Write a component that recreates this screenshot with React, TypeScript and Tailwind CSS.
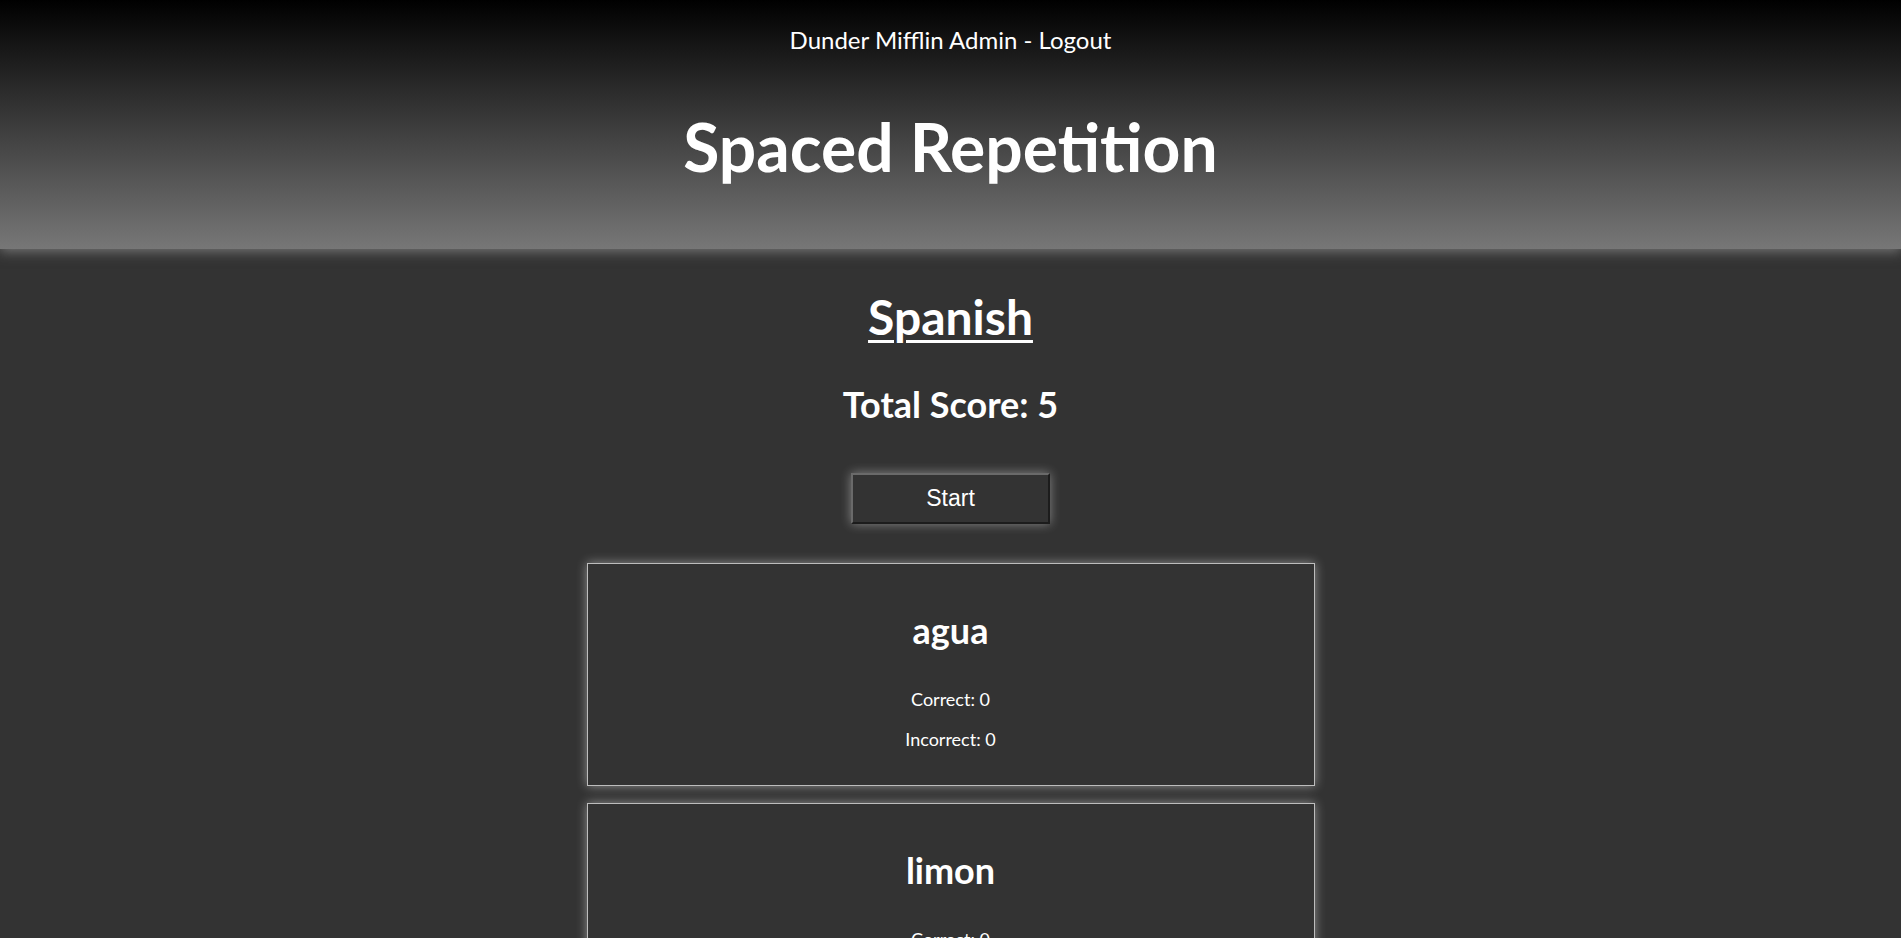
import React from "react";

const words = [
  { id: 1, word: "agua", correct: 0, incorrect: 0 },
  { id: 2, word: "limon", correct: 0, incorrect: 0 },
  { id: 3, word: "naranja", correct: 0, incorrect: 0 },
];

function WordCard({ word, correct, incorrect }: { word: string; correct: number; incorrect: number }) {
  return (
    <li className="w-[728px] border border-[#bdbdbd] bg-[#333333] shadow-[0_0_10px_rgba(255,255,255,0.45)] pt-[45px] pb-[35px] flex flex-col items-center">
      <h3 className="text-[36px] leading-[1.2] font-bold text-white">{word}</h3>
      <p className="mt-[37px] text-[18px] leading-[1.2] text-white">Correct: {correct}</p>
      <p className="mt-[18px] text-[18px] leading-[1.2] text-white">Incorrect: {incorrect}</p>
    </li>
  );
}

export default function App() {
  return (
    <div className="min-h-screen bg-[#333333] font-['Lato',sans-serif] text-white">
      <header className="relative z-10 h-[249px] bg-[linear-gradient(to_bottom,#000000,#777777)] shadow-[0_2px_12px_rgba(170,170,170,0.6)] flex flex-col items-center pt-[26px]">
        <nav className="text-[24px] leading-[1.2]">
          <span>Dunder Mifflin Admin</span>
          <span> - </span>
          <a className="cursor-pointer">Logout</a>
        </nav>
        <h1 className="mt-[52px] text-[66px] leading-[1.2] font-bold">Spaced Repetition</h1>
      </header>

      <main className="flex flex-col items-center pb-10">
        <h2 className="mt-[39px] text-[48px] leading-[1.2] font-bold underline decoration-[3px] underline-offset-[5px]">
          Spanish
        </h2>
        <h3 className="mt-[37px] text-[36px] leading-[1.2] font-bold">Total Score: 5</h3>
        <button className="mt-[47px] w-[199px] h-[51px] bg-[#333333] border-2 border-t-[#6a6a6a] border-l-[#6a6a6a] border-b-[#1c1c1c] border-r-[#1c1c1c] shadow-[0_0_10px_rgba(255,255,255,0.4)] font-['Liberation_Sans',Arial,sans-serif] text-[23px] text-white">
          Start
        </button>
        <ul className="mt-[39px] flex flex-col gap-[17px]">
          {words.map((w) => (
            <WordCard key={w.id} word={w.word} correct={w.correct} incorrect={w.incorrect} />
          ))}
        </ul>
      </main>
    </div>
  );
}
